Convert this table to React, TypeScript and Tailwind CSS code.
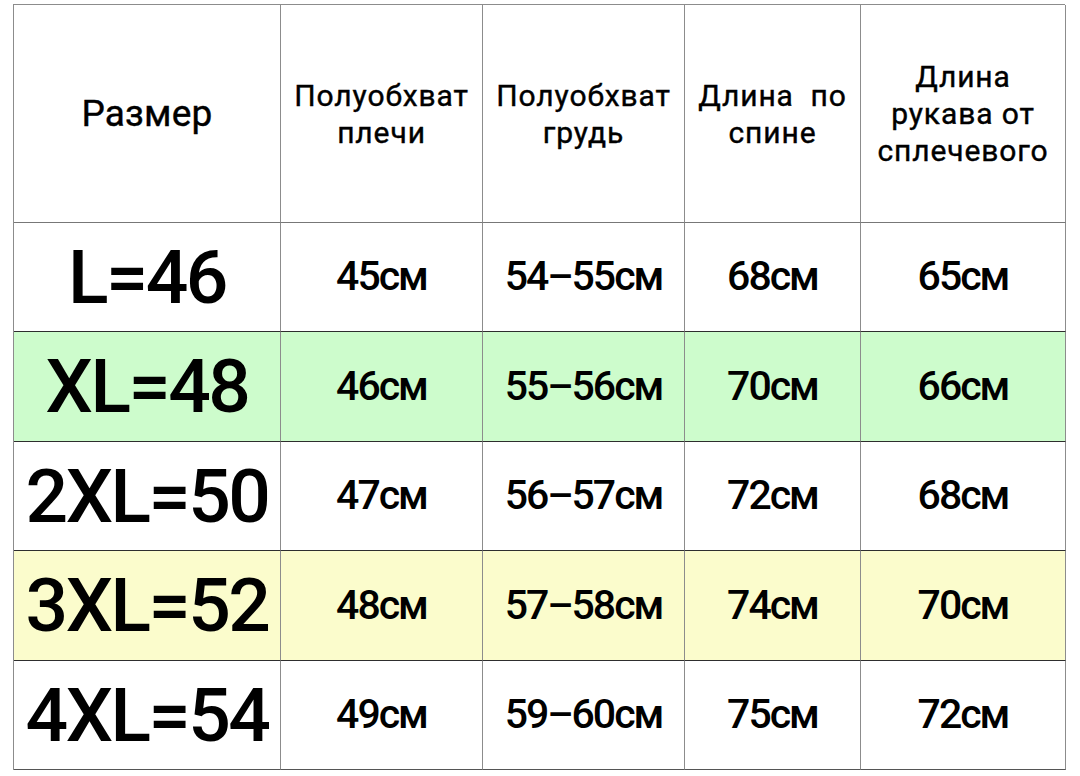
import React from "react";

type Row = {
  size: string;
  values: string[];
  bg: string;
};

const rows: Row[] = [
  { size: "L=46", values: ["45см", "54–55см", "68см", "65см"], bg: "bg-white" },
  { size: "XL=48", values: ["46см", "55–56см", "70см", "66см"], bg: "bg-[#cdfccc]" },
  { size: "2XL=50", values: ["47см", "56–57см", "72см", "68см"], bg: "bg-white" },
  { size: "3XL=52", values: ["48см", "57–58см", "74см", "70см"], bg: "bg-[#fbfccc]" },
  { size: "4XL=54", values: ["49см", "59–60см", "75см", "72см"], bg: "bg-white" },
];

const headers = [
  ["Полуобхват", "плечи"],
  ["Полуобхват", "грудь"],
  ["Длина  по", "спине"],
  ["Длина", "рукава от", "сплечевого"],
];

const cell = "flex items-center justify-center text-center border-r border-b border-r-[#8c8c8c]";

export default function App() {
  return (
    <div
      className="w-[1080px] h-[776px] bg-white pl-[13px] pt-[4px] text-black"
      style={{ fontFamily: "Roboto, 'Liberation Sans', sans-serif" }}
    >
      <div className="grid w-[1052px] grid-cols-[267px_202px_202px_176px_205px] grid-rows-[218px_109px_110px_109px_110px_109px] border-l border-t border-[#8c8c8c]">
        <div className={`${cell} border-b-[#777] text-[37px] tracking-[0.2px] [-webkit-text-stroke:0.4px_black]`}>
          Размер
        </div>
        {headers.map((lines, i) => (
          <div
            key={i}
            className={`${cell} border-b-[#777] flex-col text-[30px] leading-[37px] tracking-[0.9px] [-webkit-text-stroke:0.4px_black]`}
          >
            {lines.map((l) => (
              <span key={l} className="whitespace-pre">
                {l}
              </span>
            ))}
          </div>
        ))}
        {rows.map((row, r) => {
          const line = r === rows.length - 1 ? "border-b-[#555]" : "border-b-[#2e2e2e]";
          return (
            <React.Fragment key={row.size}>
              <div className={`${cell} ${line} ${row.bg} text-[75px] font-medium tracking-[-2.5px]`}>
                {row.size}
              </div>
              {row.values.map((v, i) => (
                <div
                  key={i}
                  className={`${cell} ${line} ${row.bg} text-[41px] font-medium tracking-[-2px]`}
                >
                  {v}
                </div>
              ))}
            </React.Fragment>
          );
        })}
      </div>
    </div>
  );
}
